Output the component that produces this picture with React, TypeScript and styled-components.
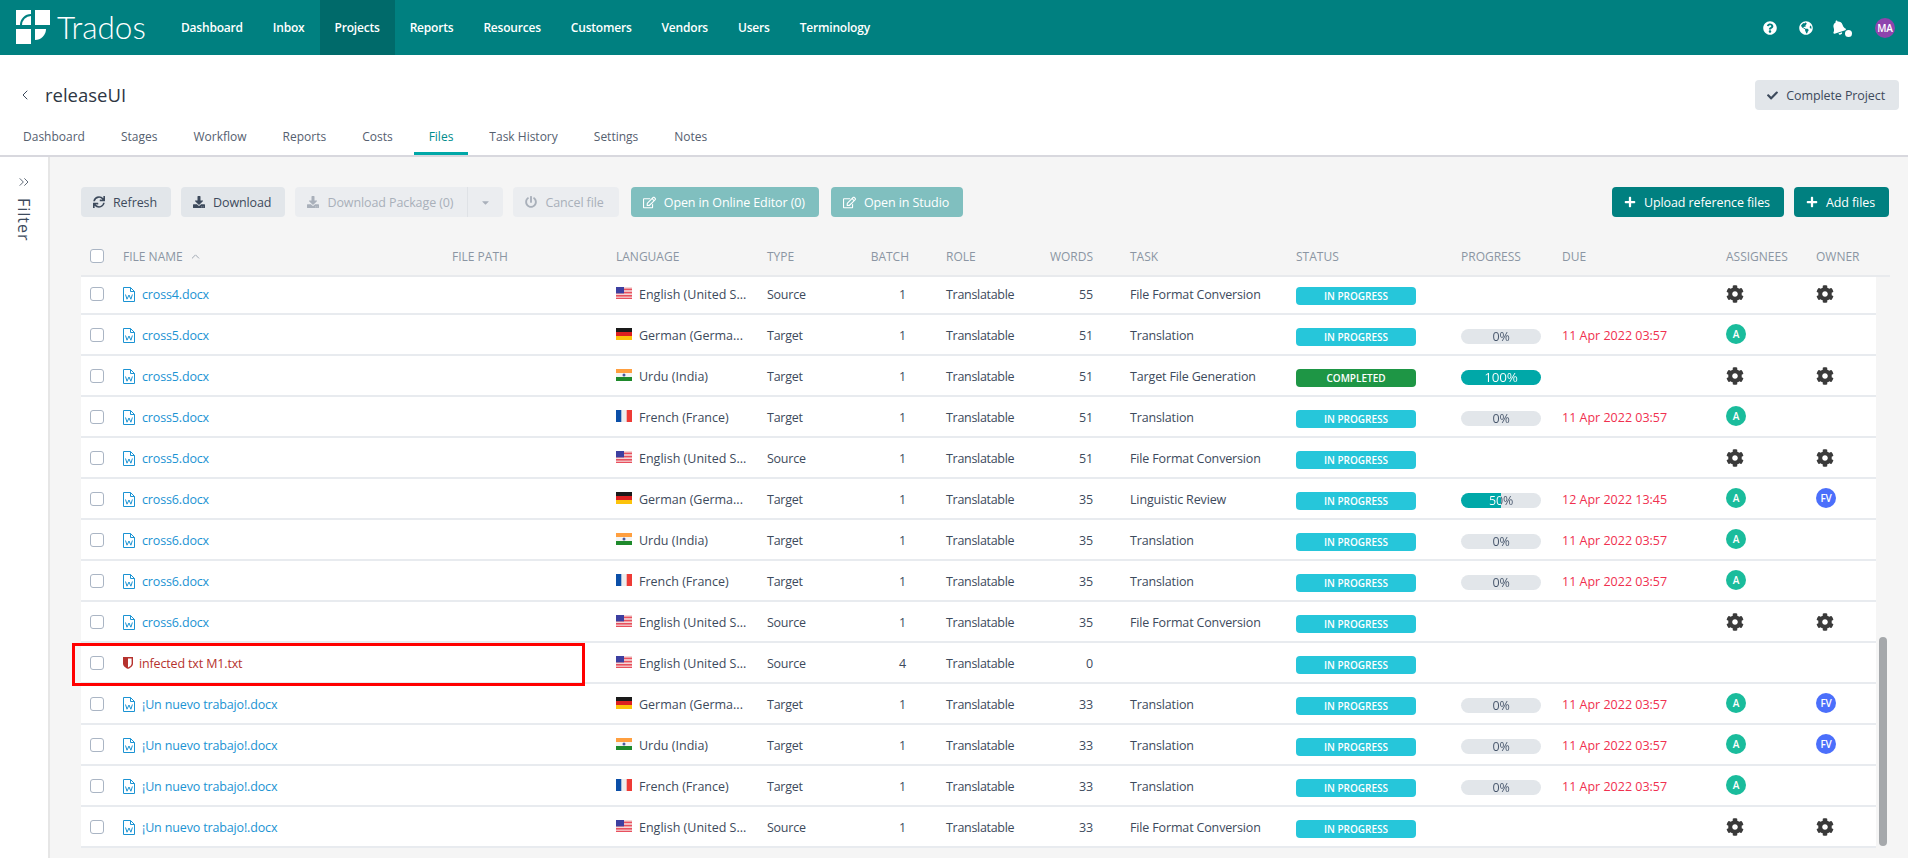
import React from 'react';
import styled, { createGlobalStyle } from 'styled-components';
import {
  FaBell, FaCaretDown, FaCheck, FaCog, FaDownload,
  FaGlobeAmericas, FaPlus, FaPowerOff, FaQuestionCircle, FaRegEdit, FaSync,
} from 'react-icons/fa';
import { ChevronLeft, ChevronsRight, ChevronUp } from 'lucide-react';

const GlobalStyle = createGlobalStyle`
  html, body { margin: 0; padding: 0; height: 100%; }
  body { font-family: "Open Sans", "Noto Sans", sans-serif; font-size: 13px; color: #3d4a5c; background: #fff; overflow: hidden; }
  * { box-sizing: border-box; }
`;

const Page = styled.div`
  width: 1908px;
  height: 858px;
  display: flex;
  flex-direction: column;
  overflow: hidden;
`;

const TopBar = styled.header`
  height: 55px;
  background: #008080;
  display: flex;
  align-items: stretch;
  flex-shrink: 0;
`;

const Logo = styled.div`
  width: 166px;
  display: flex;
  align-items: center;
  padding-left: 16px;
  gap: 6px;
  color: #fff;
`;

const LogoText = styled.span`
  font-family: Lato, "Open Sans", sans-serif;
  font-weight: 300;
  font-size: 31.5px;
  line-height: 1;
`;

const Nav = styled.nav`
  display: flex;
`;

const NavItem = styled.a<{ $active?: boolean }>`
  display: flex;
  align-items: center;
  padding: 0 15px;
  color: #fff;
  font-size: 12px;
  font-weight: 600;
  letter-spacing: -0.2px;
  background: ${p => (p.$active ? '#006a6a' : 'transparent')};
`;

const TopIcons = styled.div`
  margin-left: auto;
  display: flex;
  align-items: center;
  padding-right: 4px;
  color: #fff;
`;

const TopIcon = styled.span<{ $w: number; $ml?: number }>`
  width: ${p => p.$w}px;
  margin-left: ${p => p.$ml || 0}px;
  display: flex;
  justify-content: center;
  position: relative;
  font-size: 14px;
`;

const BellGlyph = styled(FaBell)`
  font-size: 15px;
  transform: rotate(-18deg);
`;

const BellDot = styled.i`
  position: absolute;
  width: 7px;
  height: 7px;
  border-radius: 50%;
  background: #fff;
  left: 21px;
  top: calc(50% + 2px);
`;

const Avatar = styled.span<{ $bg: string }>`
  width: 20px;
  height: 20px;
  border-radius: 50%;
  background: ${p => p.$bg};
  color: #fff;
  font-size: 10px;
  font-weight: 600;
  letter-spacing: -0.2px;
  display: inline-flex;
  align-items: center;
  justify-content: center;
`;

const ProjectBar = styled.div`
  height: 102px;
  flex-shrink: 0;
  border-bottom: 2px solid #d8d8de;
  display: flex;
  flex-direction: column;
`;

const TitleRow = styled.div`
  height: 62px;
  display: flex;
  align-items: center;
  padding: 18px 9px 0 17px;
  flex-shrink: 0;
`;

const BackIcon = styled.span`
  display: flex;
  width: 28px;
  color: #3d4a5c;
`;

const Title = styled.h1`
  margin: 0 0 1px;
  font-size: 18.5px;
  font-weight: 400;
  color: #2d3643;
`;

const Tabs = styled.div`
  display: flex;
  gap: 6px;
  padding-left: 8px;
  flex: 1;
`;

const Tab = styled.a<{ $active?: boolean }>`
  padding: 3px 15px 0;
  display: flex;
  align-items: center;
  height: 38px;
  font-size: 12px;
  color: ${p => (p.$active ? '#008c8c' : '#55606f')};
  border-bottom: ${p => (p.$active ? '3px solid #00a8a8' : '3px solid transparent')};
`;

const Body = styled.div`
  flex: 1;
  display: flex;
  min-height: 0;
`;

const FilterRail = styled.aside`
  width: 50px;
  flex-shrink: 0;
  border-right: 2px solid #e6e6e6;
  display: flex;
  flex-direction: column;
  align-items: center;
  padding-top: 17px;
  gap: 8px;
  color: #3d4a5c;
`;

const FilterLabel = styled.span`
  writing-mode: vertical-rl;
  font-size: 16px;
  letter-spacing: 1px;
`;

const Main = styled.main`
  flex: 1;
  min-width: 0;
  background: #f5f5f5;
  padding: 30px 0 0 31px;
  position: relative;
`;

const Toolbar = styled.div`
  display: flex;
  gap: 10px;
  height: 30px;
  padding-right: 19px;
`;

const Button = styled.button<{ $kind?: 'plain' | 'off' | 'tealOff' | 'teal' }>`
  height: 30px;
  border: 0;
  border-radius: 4px;
  padding: 0 ${p => (p.$kind === 'off' ? 15 : 14)}px 0 12px;
  margin-left: ${p => (p.$kind === 'tealOff' ? 2 : 0)}px;
  font: inherit;
  font-size: 12.5px;
  letter-spacing: -0.1px;
  display: inline-flex;
  align-items: center;
  gap: 8px;
  white-space: nowrap;
  background: ${p => ({ plain: '#e2e6ea', off: '#ebedf0', tealOff: '#80bfbf', teal: '#008080' }[p.$kind || 'plain'])};
  color: ${p => ({ plain: '#3d4a5c', off: '#a9b0ba', tealOff: '#fff', teal: '#fff' }[p.$kind || 'plain'])};
`;

const SplitCaret = styled.span`
  border-left: 1px solid #dfe2e6;
  height: 30px;
  width: 36px;
  display: flex;
  align-items: center;
  justify-content: center;
  margin-right: -15px;
  margin-left: 6px;
  font-size: 11px;
`;

const PushRight = styled.div`
  margin-left: auto;
  display: flex;
  gap: 10px;
`;

const columns = '42px 329px 164px 151px 104px 38px 140px 44px 203px 165px 101px 164px 90px';

const HeadRow = styled.div`
  margin-top: 20px;
  height: 40px;
  width: 1809px;
  display: grid;
  grid-template-columns: ${columns} 74px;
  align-items: center;
  border-bottom: 2px solid #e8eaed;
  font-size: 12px;
  color: #8b95a3;
  text-transform: uppercase;
`;

const HeadCell = styled.div<{ $right?: boolean; $pad?: number }>`
  padding-left: ${p => p.$pad || 0}px;
  white-space: nowrap;
  display: flex;
  align-items: center;
  justify-content: ${p => (p.$right ? 'flex-end' : 'flex-start')};
`;

const SortIcon = styled.span`
  margin-left: 6px;
  display: flex;
`;

const Viewport = styled.div`
  height: 571px;
  width: 1795px;
  overflow: hidden;
`;

const RowList = styled.div`
  margin-top: -3px;
  background: #fff;
`;

const Row = styled.div`
  height: 41px;
  display: grid;
  grid-template-columns: ${columns} 60px;
  align-items: center;
  border-bottom: 2px solid #e8ebef;
  padding-top: 1px;
  color: #3d4a5c;
  font-size: 12.5px;
  letter-spacing: -0.15px;
`;

const Cell = styled.div<{ $right?: boolean; $pad?: number; $ls?: number }>`
  padding-left: ${p => p.$pad || 0}px;
  white-space: nowrap;
  display: flex;
  align-items: center;
  letter-spacing: ${p => (p.$ls === undefined ? 'inherit' : `${p.$ls}px`)};
  justify-content: ${p => (p.$right ? 'flex-end' : 'flex-start')};
`;

const Check = styled.span`
  display: block;
  width: 14px;
  height: 14px;
  margin-left: 9px;
  border: 1.5px solid #aab5c4;
  border-radius: 3px;
  background: #fff;
`;

const FileLink = styled.a<{ $bad?: boolean }>`
  display: flex;
  align-items: center;
  gap: ${p => (p.$bad ? 6 : 7)}px;
  color: ${p => (p.$bad ? '#b6322e' : '#1b93d3')};
`;

const FlagBox = styled.span`
  display: flex;
  margin-right: 7px;
  margin-top: -3px;
`;

const StatusPill = styled.span<{ $done?: boolean }>`
  width: 120px;
  height: 18px;
  margin-top: 4px;
  border-radius: 4px;
  background: ${p => (p.$done ? '#1e9645' : '#26c6da')};
  color: #fff;
  font-size: 10px;
  font-weight: 600;
  letter-spacing: 0;
  display: flex;
  align-items: center;
  justify-content: center;
  text-transform: uppercase;
`;

const Bar = styled.div<{ $pct: number }>`
  width: 80px;
  height: 15px;
  margin-top: 3px;
  border-radius: 8px;
  background: linear-gradient(90deg, #00a8a8 ${p => p.$pct}%, #e2e6ea ${p => p.$pct}%);
  display: flex;
  justify-content: center;
  align-items: center;
`;

const BarLabel = styled.span<{ $pct: number }>`
  width: 100%;
  text-align: center;
  font-size: ${p => (p.$pct === 100 ? 13.5 : 12.5)}px;
  line-height: 15px;
  background: linear-gradient(90deg, #fff ${p => p.$pct}%, #45546a ${p => p.$pct}%);
  -webkit-background-clip: text;
  background-clip: text;
  color: transparent;
`;

const Due = styled.span`
  color: #f0304f;
`;

const Gear = styled.span`
  display: flex;
  color: #3a3a3a;
  font-size: 18px;
  margin-top: -1px;
`;

const AvatarSlot = styled.span`
  display: flex;
  margin-top: -3px;
`;

const ScrollThumb = styled.div`
  position: absolute;
  left: 1829px;
  top: 480px;
  width: 8px;
  height: 209px;
  border-radius: 4px;
  background: #a5a8ab;
`;

const Callout = styled.div`
  position: absolute;
  left: 22px;
  top: 486px;
  width: 513px;
  height: 43px;
  border: 3px solid #f00;
  pointer-events: none;
`;

const Word = () => (
  <svg width="12" height="15" viewBox="0 0 12 15" fill="none" stroke="#1b93d3" strokeWidth="1">
    <path d="M.5.500h7l4 4v10H.5zM7.500.500v4h4" />
    <path d="M2.500 7.500l1.500 4.700L6 8l1.900 4.200 1.500-4.700" />
  </svg>
);

const Shield = () => (
  <svg width="10" height="12" viewBox="0 0 10 12">
    <path d="M0 0h10v6.500C10 9.500 7 11 5 12 3 11 0 9.500 0 6.500z" fill="#b6322e" />
    <path d="M5 1.500h3.600v5C8.600 8.500 6.700 9.600 5 10.400z" fill="#fff" />
  </svg>
);

const TradosMark = () => (
  <svg width="35" height="35" viewBox="0 0 35 35" fill="#fff">
    <path d="M0 0h15v4A11 11 0 0 0 4 15H0z" />
    <path d="M15 15H6a9 9 0 0 1 9-9z" />
    <path d="M19 0h15v15H19z" />
    <path d="M0 19h15v15H0z" />
    <path d="M19 19h11a11 11 0 0 1-11 11z" />
  </svg>
);

const Flag = ({ code }: { code: string }) => {
  if (code === 'de') {
    return (
      <svg width="16" height="12" viewBox="0 0 16 12">
        <rect width="16" height="4" fill="#1a1a1a" />
        <rect y="4" width="16" height="4" fill="#dd2020" />
        <rect y="8" width="16" height="4" fill="#fcc30b" />
      </svg>
    );
  }
  if (code === 'in') {
    return (
      <svg width="16" height="12" viewBox="0 0 16 12">
        <rect width="16" height="4" fill="#ff9f3f" />
        <rect y="4" width="16" height="4" fill="#f4f4f4" />
        <rect y="8" width="16" height="4" fill="#1e8a2c" />
        <circle cx="8" cy="6" r="1.500" fill="#4a5a9c" />
      </svg>
    );
  }
  if (code === 'fr') {
    return (
      <svg width="16" height="12" viewBox="0 0 16 12">
        <rect width="16" height="12" fill="#eee" />
        <rect width="5.300" height="12" fill="#0b4fa8" />
        <rect x="10.700" width="5.300" height="12" fill="#ee3b36" />
      </svg>
    );
  }
  return (
    <svg width="16" height="12" viewBox="0 0 16 12">
      <rect width="16" height="12" fill="#f4d6d6" />
      <rect y="1.600" width="16" height="1.600" fill="#e8505e" />
      <rect y="4.800" width="16" height="1.600" fill="#e8505e" />
      <rect y="8" width="16" height="1.600" fill="#e8505e" />
      <rect y="10.800" width="16" height="1.200" fill="#e8505e" />
      <rect width="8" height="6.400" fill="#3c3fa0" />
    </svg>
  );
};

type FileRow = {
  name: string;
  flag: string;
  lang: string;
  type: string;
  batch: number;
  words: number;
  task: string;
  done?: boolean;
  pct?: number;
  due?: string;
  assignee?: 'gear' | 'A';
  owner?: 'gear' | 'FV';
  bad?: boolean;
};

const EN = 'English (United S...';
const DE = 'German (Germa...';
const UR = 'Urdu (India)';
const FR = 'French (France)';
const D1 = '11 Apr 2022 03:57';
const NUEVO = '¡Un nuevo trabajo!.docx';

const rows: FileRow[] = [
  { name: 'cross4.docx', flag: 'us', lang: EN, type: 'Source', batch: 1, words: 55, task: 'File Format Conversion', assignee: 'gear', owner: 'gear' },
  { name: 'cross5.docx', flag: 'de', lang: DE, type: 'Target', batch: 1, words: 51, task: 'Translation', pct: 0, due: D1, assignee: 'A' },
  { name: 'cross5.docx', flag: 'in', lang: UR, type: 'Target', batch: 1, words: 51, task: 'Target File Generation', done: true, pct: 100, assignee: 'gear', owner: 'gear' },
  { name: 'cross5.docx', flag: 'fr', lang: FR, type: 'Target', batch: 1, words: 51, task: 'Translation', pct: 0, due: D1, assignee: 'A' },
  { name: 'cross5.docx', flag: 'us', lang: EN, type: 'Source', batch: 1, words: 51, task: 'File Format Conversion', assignee: 'gear', owner: 'gear' },
  { name: 'cross6.docx', flag: 'de', lang: DE, type: 'Target', batch: 1, words: 35, task: 'Linguistic Review', pct: 50, due: '12 Apr 2022 13:45', assignee: 'A', owner: 'FV' },
  { name: 'cross6.docx', flag: 'in', lang: UR, type: 'Target', batch: 1, words: 35, task: 'Translation', pct: 0, due: D1, assignee: 'A' },
  { name: 'cross6.docx', flag: 'fr', lang: FR, type: 'Target', batch: 1, words: 35, task: 'Translation', pct: 0, due: D1, assignee: 'A' },
  { name: 'cross6.docx', flag: 'us', lang: EN, type: 'Source', batch: 1, words: 35, task: 'File Format Conversion', assignee: 'gear', owner: 'gear' },
  { name: 'infected txt M1.txt', flag: 'us', lang: EN, type: 'Source', batch: 4, words: 0, task: '', bad: true },
  { name: NUEVO, flag: 'de', lang: DE, type: 'Target', batch: 1, words: 33, task: 'Translation', pct: 0, due: D1, assignee: 'A', owner: 'FV' },
  { name: NUEVO, flag: 'in', lang: UR, type: 'Target', batch: 1, words: 33, task: 'Translation', pct: 0, due: D1, assignee: 'A', owner: 'FV' },
  { name: NUEVO, flag: 'fr', lang: FR, type: 'Target', batch: 1, words: 33, task: 'Translation', pct: 0, due: D1, assignee: 'A' },
  { name: NUEVO, flag: 'us', lang: EN, type: 'Source', batch: 1, words: 33, task: 'File Format Conversion', assignee: 'gear', owner: 'gear' },
];

const navItems = ['Dashboard', 'Inbox', 'Projects', 'Reports', 'Resources', 'Customers', 'Vendors', 'Users', 'Terminology'];
const tabItems = ['Dashboard', 'Stages', 'Workflow', 'Reports', 'Costs', 'Files', 'Task History', 'Settings', 'Notes'];

const People = ({ who }: { who?: string }) => {
  if (who === 'gear') return <Gear><FaCog /></Gear>;
  if (who === 'A') return <AvatarSlot><Avatar $bg="#1abc9c">A</Avatar></AvatarSlot>;
  if (who === 'FV') return <AvatarSlot><Avatar $bg="#4b6ffb">FV</Avatar></AvatarSlot>;
  return null;
};

const App: React.FC = () => (
  <Page>
    <GlobalStyle />
    <TopBar>
      <Logo>
        <TradosMark />
        <LogoText>Trados</LogoText>
      </Logo>
      <Nav>
        {navItems.map(n => <NavItem key={n} $active={n === 'Projects'}>{n}</NavItem>)}
      </Nav>
      <TopIcons>
        <TopIcon $w={36}><FaQuestionCircle /></TopIcon>
        <TopIcon $w={36}><FaGlobeAmericas /></TopIcon>
        <TopIcon $w={28}><BellGlyph /><BellDot /></TopIcon>
        <TopIcon $w={38} $ml={14}><Avatar $bg="#8e44ad">MA</Avatar></TopIcon>
      </TopIcons>
    </TopBar>
    <ProjectBar>
      <TitleRow>
        <BackIcon><ChevronLeft size={16} strokeWidth={1.5} /></BackIcon>
        <Title>releaseUI</Title>
        <PushRight>
          <Button><FaCheck size={11} /> Complete Project</Button>
        </PushRight>
      </TitleRow>
      <Tabs>
        {tabItems.map(t => <Tab key={t} $active={t === 'Files'}>{t}</Tab>)}
      </Tabs>
    </ProjectBar>
    <Body>
      <FilterRail>
        <ChevronsRight size={16} strokeWidth={1.25} />
        <FilterLabel>Filter</FilterLabel>
      </FilterRail>
      <Main>
        <Toolbar>
          <Button><FaSync size={12} /> Refresh</Button>
          <Button><FaDownload size={12} /> Download</Button>
          <Button $kind="off"><FaDownload size={12} /> Download Package (0)<SplitCaret><FaCaretDown /></SplitCaret></Button>
          <Button $kind="off"><FaPowerOff size={12} /> Cancel file</Button>
          <Button $kind="tealOff"><FaRegEdit size={13} /> Open in Online Editor (0)</Button>
          <Button $kind="tealOff"><FaRegEdit size={13} /> Open in Studio</Button>
          <PushRight>
            <Button $kind="teal"><FaPlus size={12} /> Upload reference files</Button>
            <Button $kind="teal"><FaPlus size={12} /> Add files</Button>
          </PushRight>
        </Toolbar>
        <HeadRow>
          <HeadCell><Check /></HeadCell>
          <HeadCell>File name<SortIcon><ChevronUp size={13} strokeWidth={1.5} /></SortIcon></HeadCell>
          <HeadCell>File path</HeadCell>
          <HeadCell>Language</HeadCell>
          <HeadCell>Type</HeadCell>
          <HeadCell $right>Batch</HeadCell>
          <HeadCell $pad={37}>Role</HeadCell>
          <HeadCell $right>Words</HeadCell>
          <HeadCell $pad={37}>Task</HeadCell>
          <HeadCell>Status</HeadCell>
          <HeadCell>Progress</HeadCell>
          <HeadCell>Due</HeadCell>
          <HeadCell>Assignees</HeadCell>
          <HeadCell>Owner</HeadCell>
        </HeadRow>
        <Viewport>
          <RowList>
            {rows.map((r, i) => (
              <Row key={i}>
                <Cell><Check /></Cell>
                <Cell>
                  <FileLink $bad={r.bad}>
                    {r.bad ? <Shield /> : <Word />}
                    {r.name}
                  </FileLink>
                </Cell>
                <Cell />
                <Cell $ls={0}><FlagBox><Flag code={r.flag} /></FlagBox>{r.lang}</Cell>
                <Cell $ls={-0.25}>{r.type}</Cell>
                <Cell $right>{r.batch}&nbsp;</Cell>
                <Cell $pad={37} $ls={-0.3}>Translatable</Cell>
                <Cell $right>{r.words}</Cell>
                <Cell $pad={37}>{r.task}</Cell>
                <Cell><StatusPill $done={r.done}>{r.done ? 'Completed' : 'In Progress'}</StatusPill></Cell>
                <Cell>
                  {r.pct !== undefined && (
                    <Bar $pct={r.pct}><BarLabel $pct={r.pct}>{r.pct}%</BarLabel></Bar>
                  )}
                </Cell>
                <Cell $ls={0}>{r.due && <Due>{r.due}</Due>}</Cell>
                <Cell><People who={r.assignee} /></Cell>
                <Cell><People who={r.owner} /></Cell>
              </Row>
            ))}
          </RowList>
        </Viewport>
        <ScrollThumb />
        <Callout />
      </Main>
    </Body>
  </Page>
);

export default App;
